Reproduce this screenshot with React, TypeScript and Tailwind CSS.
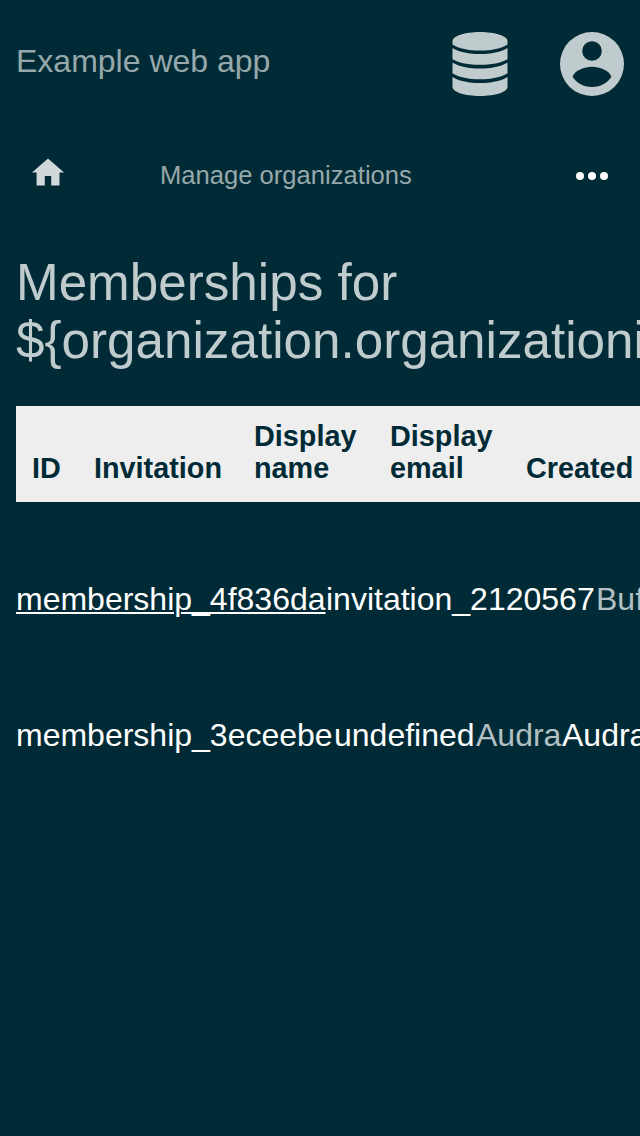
function DatabaseIcon() {
  return (
    <svg className="h-16 w-14" viewBox="0 0 56 64" fill="#c0cbce">
      <path d="M.5 9C.5 4 13 0 28 0s27.500 4 27.500 9v3.500C49 16.500 40 18.600 28 18.600S7 16.500.5 12.500Z" />
      <path d="M.5 16C7 20 17 22 28 22s21-2 27.500-6v11.200C49 31 39 32.800 28 32.800S7 31 .5 27.200Z" />
      <path d="M.5 30.500C7 34.500 17 36.500 28 36.500s21-2 27.500-6V41.200C49 45.200 39 47.200 28 47.200S7 45.200.5 41.200Z" />
      <path d="M.5 45C7 49 17 51 28 51S49 49 55.500 45v10c0 5-12.500 9-27.500 9S.5 60 .5 55Z" />
    </svg>
  );
}

function AccountIcon() {
  return (
    <svg className="size-16" viewBox="0 0 64 64" fill="#c0cbce">
      <path fillRule="evenodd" d="M32 0a32 32 0 1 1 0 64 32 32 0 0 1 0-64Zm0 9.200a9.800 9.800 0 1 0 0 19.600 9.800 9.800 0 0 0 0-19.600ZM12.600 44.800C16 50.500 23 55 32 55s16-4.500 19.400-10.200C49.500 38.500 39.500 34.800 32 34.800s-17.500 3.700-19.400 10Z" />
    </svg>
  );
}

function HomeIcon() {
  return (
    <svg className="-mt-2 h-7 w-8" viewBox="0 0 32 28" fill="#d0d8da">
      <path d="M16 .4 32 14.600H27.500V27.600H19.200V18H12.800v9.600H4.600V14.600H0Z" />
    </svg>
  );
}

function MoreIcon() {
  return (
    <svg className="ml-auto h-8 w-8" viewBox="0 0 32 32" fill="#ffffff">
      <circle cx="4" cy="16" r="4" />
      <circle cx="16" cy="16" r="4" />
      <circle cx="28" cy="16" r="4" />
    </svg>
  );
}

export default function App() {
  return (
    <div className="h-[1136px] w-[640px] overflow-hidden bg-[#002b36] font-['Liberation_Sans',sans-serif] text-[#c0cbce]">
      <header className="flex h-32 items-center justify-between px-4">
        <span className="pb-1.5 text-[32px] text-[#97a8ab]">Example web app</span>
        <div className="flex items-center gap-[52px]">
          <DatabaseIcon />
          <AccountIcon />
        </div>
      </header>
      <nav className="flex h-24 items-center px-8">
        <HomeIcon />
        <span className="ml-24 pb-0.5 text-[25.6px] text-[#97a8ab]">Manage organizations</span>
        <MoreIcon />
      </nav>
      <main className="pl-4 pt-[30px]">
        <h1 className="text-[51.2px] leading-[58px]">Memberships for<br />{"${organization.organizationid}"}</h1>
        <div className="mt-9 flex h-24 w-[900px] items-end bg-[#eeeeee] px-4 pb-[18px] text-[28.8px] font-bold leading-8 text-[#002b36]">
          <div className="w-[62px]">ID</div>
          <div className="w-40">Invitation</div>
          <div className="w-[136px]">Display<br />name</div>
          <div className="w-[136px]">Display<br />email</div>
          <div>Created</div>
        </div>
        <div className="mt-[79px] flex w-[1200px] text-[32px] leading-9 text-white">
          <span className="w-[310px] underline decoration-2 underline-offset-2">membership_4f836da</span>
          <span className="w-[270px]">invitation_2120567</span>
          <span className="text-[#b3c0c3]">Buffy</span>
        </div>
        <div className="mt-[100px] flex w-[1200px] text-[32px] leading-9 text-white">
          <span className="w-[318px]">membership_3eceebe</span>
          <span className="w-[142px]">undefined</span>
          <span className="w-[86px] text-[#b3c0c3]">Audra</span>
          <span>Audra</span>
        </div>
      </main>
    </div>
  );
}
